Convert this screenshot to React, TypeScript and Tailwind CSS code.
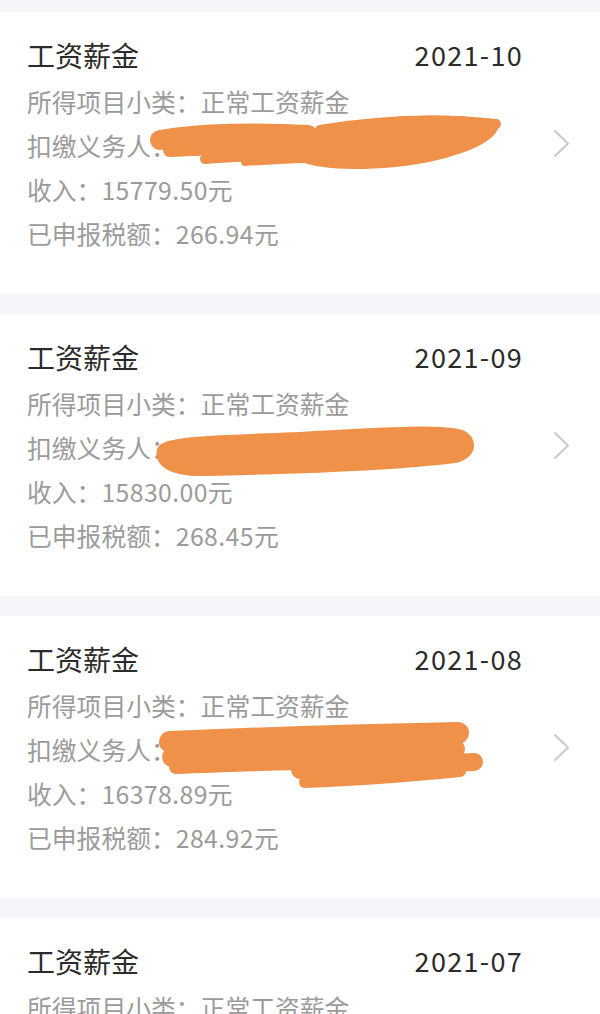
import React from "react";

type Item = {
  date: string;
  income: string;
  tax: string;
  scribble?: React.ReactNode;
};

const O = "#f0914a";

const scribble1 = (
  <g fill="none" stroke={O} strokeLinecap="round" strokeLinejoin="round">
    <path d="M160,140 C200,133 260,132 308,135" strokeWidth="20" />
    <path d="M170,150 C220,148 262,146 305,145" strokeWidth="14" />
    <path d="M205,159 C240,157 280,154 312,150" strokeWidth="10" />
    <path d="M245,162 C275,160 300,159 330,158" strokeWidth="8" />
    <path
      d="M300,148 C340,124 420,114 494,125 C490,142 440,158 395,162 C350,166 318,164 300,156 Z"
      fill={O}
      strokeWidth="10"
    />
    <path d="M320,130 C380,120 440,118 496,124" strokeWidth="10" />
    <path d="M290,142 C330,140 370,138 410,136" strokeWidth="14" />
    <path d="M330,160 C380,160 430,155 470,142" strokeWidth="8" />
  </g>
);

const scribble2 = (
  <g fill={O} stroke={O} strokeLinecap="round" strokeLinejoin="round">
    <path
      d="M160,450 C162,438 230,438 300,435 C370,431 440,426 462,433 C476,440 474,455 455,460 C400,467 300,471 205,473 C168,474 157,462 160,450 Z"
      strokeWidth="6"
    />
  </g>
);

const scribble3 = (
  <g fill="none" stroke={O} strokeLinecap="round" strokeLinejoin="round">
    <path d="M170,742 C260,738 360,735 458,733" strokeWidth="22" />
    <path d="M172,757 C260,755 360,751 455,749" strokeWidth="20" />
    <path d="M176,767 C220,765 260,764 300,763" strokeWidth="14" />
    <path d="M300,770 C360,767 420,764 474,762" strokeWidth="18" />
    <path d="M305,782 C360,780 410,776 460,771" strokeWidth="12" />
  </g>
);

const items: Item[] = [
  { date: "2021-10", income: "15779.50", tax: "266.94", scribble: scribble1 },
  { date: "2021-09", income: "15830.00", tax: "268.45", scribble: scribble2 },
  { date: "2021-08", income: "16378.89", tax: "284.92", scribble: scribble3 },
  { date: "2021-07", income: "15830.00", tax: "268.45" },
];

function Chevron() {
  return (
    <svg width="17" height="29" viewBox="0 0 17 29" className="shrink-0">
      <path
        d="M2,2 L15,14.5 L2,27"
        fill="none"
        stroke="#c9c9c9"
        strokeWidth="2"
        strokeLinecap="round"
        strokeLinejoin="round"
      />
    </svg>
  );
}

function Card({ item, top }: { item: Item; top: number }) {
  return (
    <div className="relative bg-white h-[282px] shrink-0 flex items-start pl-[27px] pr-[31px] pt-[21px]">
      <div className="flex items-center w-full">
        <div className="flex-1">
          <div className="flex items-center justify-between h-[46px] pb-[2px]">
            <span className="text-[28px] text-[#2b2b2b] leading-[44px]">工资薪金</span>
            <span className="text-[27px] text-[#2b2b2b] leading-[44px] tracking-[1.3px] -mr-[1px]">{item.date}</span>
          </div>
          <div className="text-[24.8px] text-[#9b9b9b] leading-[44px]">所得项目小类：正常工资薪金</div>
          <div className="text-[24.8px] text-[#9b9b9b] leading-[44px]">扣缴义务人：</div>
          <div className="text-[24.8px] text-[#9b9b9b] leading-[44px]">
            收入：<span className="tracking-[0.4px]">{item.income}</span>元
          </div>
          <div className="text-[24.8px] text-[#9b9b9b] leading-[44px]">
            已申报税额：<span className="tracking-[0.4px]">{item.tax}</span>元
          </div>
        </div>
        <div className="ml-[31px] -mr-[1px] mt-[-2px]">
          <Chevron />
        </div>
      </div>
      {item.scribble && (
        <svg
          className="absolute left-0 top-0 pointer-events-none"
          width="600"
          height="282"
          viewBox={`0 ${top} 600 282`}
        >
          {item.scribble}
        </svg>
      )}
    </div>
  );
}

export default function App() {
  const tops = [12, 314, 616, 918];
  return (
    <div
      className="w-[600px] h-[1014px] overflow-hidden bg-[#f5f6fa] flex flex-col gap-[20px] pt-[12px]"
      style={{ fontFamily: '"Noto Sans CJK SC", "Noto Sans", sans-serif' }}
    >
      {items.map((it, i) => (
        <Card key={i} item={it} top={tops[i]} />
      ))}
    </div>
  );
}
